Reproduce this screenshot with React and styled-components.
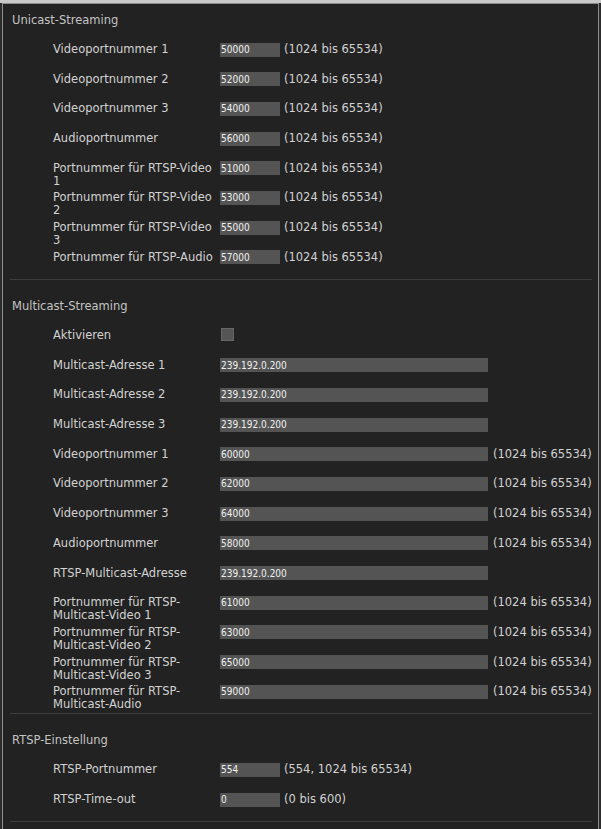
import React from 'react';
import styled, { createGlobalStyle } from 'styled-components';

const GlobalStyle = createGlobalStyle`
	html, body {
		margin: 0;
		padding: 0;
		background: #2c2c2c;
	}
	body {
		font-family: "DejaVu Sans", Verdana, sans-serif;
	}
`;

const unicast = [
	{label: 'Videoportnummer 1', value: '50000', range: '(1024 bis 65534)'},
	{label: 'Videoportnummer 2', value: '52000', range: '(1024 bis 65534)'},
	{label: 'Videoportnummer 3', value: '54000', range: '(1024 bis 65534)'},
	{label: 'Audioportnummer', value: '56000', range: '(1024 bis 65534)'},
	{label: 'Portnummer für RTSP-Video 1', value: '51000', range: '(1024 bis 65534)'},
	{label: 'Portnummer für RTSP-Video 2', value: '53000', range: '(1024 bis 65534)'},
	{label: 'Portnummer für RTSP-Video 3', value: '55000', range: '(1024 bis 65534)'},
	{label: 'Portnummer für RTSP-Audio', value: '57000', range: '(1024 bis 65534)'},
];

const multicast = [
	{label: 'Multicast-Adresse 1', value: '239.192.0.200'},
	{label: 'Multicast-Adresse 2', value: '239.192.0.200'},
	{label: 'Multicast-Adresse 3', value: '239.192.0.200'},
	{label: 'Videoportnummer 1', value: '60000', range: '(1024 bis 65534)'},
	{label: 'Videoportnummer 2', value: '62000', range: '(1024 bis 65534)'},
	{label: 'Videoportnummer 3', value: '64000', range: '(1024 bis 65534)'},
	{label: 'Audioportnummer', value: '58000', range: '(1024 bis 65534)'},
	{label: 'RTSP-Multicast-Adresse', value: '239.192.0.200'},
	{label: 'Portnummer für RTSP-Multicast-Video 1', value: '61000', range: '(1024 bis 65534)'},
	{label: 'Portnummer für RTSP-Multicast-Video 2', value: '63000', range: '(1024 bis 65534)'},
	{label: 'Portnummer für RTSP-Multicast-Video 3', value: '65000', range: '(1024 bis 65534)'},
	{label: 'Portnummer für RTSP-Multicast-Audio', value: '59000', range: '(1024 bis 65534)'},
];

const rtsp = [
	{label: 'RTSP-Portnummer', value: '554', range: '(554, 1024 bis 65534)'},
	{label: 'RTSP-Time-out', value: '0', range: '(0 bis 600)'},
];

const Field = ({label, value, range, wide}) => (
	<Row>
		<Label>{label}</Label>
		<Input $wide={wide} defaultValue={value} />
		{range && <Range $wide={wide}>{range}</Range>}
	</Row>
);

export default function App() {
	return (
		<>
			<GlobalStyle />
			<Frame>
				<Panel>
					<Section $first>
						<Heading>Unicast-Streaming</Heading>
						{unicast.map((f) => (
							<Field key={f.label} {...f} />
						))}
						<Divider />
					</Section>

					<Section>
						<Heading>Multicast-Streaming</Heading>
						<Row>
							<Label>Aktivieren</Label>
							<Check type="checkbox" />
						</Row>
						{multicast.map((f) => (
							<Field key={f.label} wide {...f} />
						))}
						<Divider />
					</Section>

					<Section>
						<Heading>RTSP-Einstellung</Heading>
						{rtsp.map((f) => (
							<Field key={f.label} {...f} />
						))}
						<Divider />
					</Section>
				</Panel>
			</Frame>
		</>
	);
}

const Frame = styled.div`
	border-top: 3px solid #c9c9c9;
	padding: 0 2px;
	min-height: 826px;
	background: #2c2c2c;
`;

const Panel = styled.div`
	background: #222222;
	border: 1px solid #8c8c8c;
	border-bottom: none;
	min-height: 825px;
	padding: 0 6px 0 7px;
`;

const Section = styled.section`
	padding-top: ${(p) => (p.$first ? '9.5px' : '20px')};
`;

const Heading = styled.div`
	padding-left: 2px;
	font-size: 11.5px;
	line-height: 13px;
	color: #c4c4c4;
	margin-bottom: 13.5px;
`;

const Row = styled.div`
	display: flex;
	align-items: flex-start;
	height: 29.7px;
	padding-left: 43px;
	box-sizing: border-box;
	padding-top: 3px;
`;

const Label = styled.div`
	width: 167px;
	flex: none;
	font-size: 11.5px;
	line-height: 13px;
	color: #d2d2d2;
`;

const Input = styled.input`
	width: ${(p) => (p.$wide ? '268px' : '60px')};
	height: 14px;
	margin: -0.5px 0 0;
	padding: 0 0 0 1px;
	border: none;
	box-sizing: border-box;
	background: #545454;
	color: #f0f0f0;
	font-family: "DejaVu Sans Condensed", "DejaVu Sans", sans-serif;
	font-size: 10px;
	font-weight: 500;
	outline: none;
	flex: none;
`;

const Range = styled.span`
	margin-left: ${(p) => (p.$wide ? '5px' : '4px')};
	font-size: 11.5px;
	line-height: 13px;
	color: #d2d2d2;
	white-space: nowrap;
`;

const Check = styled.input`
	appearance: none;
	margin: -1px 0 0 1px;
	width: 13px;
	height: 13px;
	background: #555555;
	border: 1px solid #666666;
	box-sizing: border-box;
`;

const Divider = styled.hr`
	margin: 1px 0 0;
	border: none;
	height: 1px;
	background: #3d3d3d;
`;
